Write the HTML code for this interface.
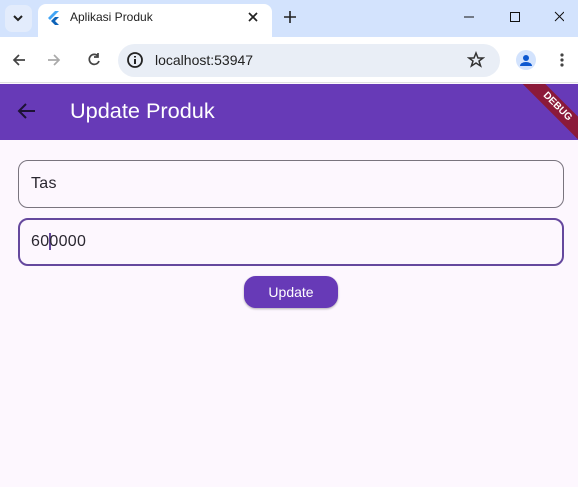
<!DOCTYPE html>
<html><head><style>
*{margin:0;padding:0;box-sizing:border-box}
body{width:578px;height:487px;overflow:hidden;background:#fdf7fe;font-family:"Liberation Sans",sans-serif;position:relative}
.top{position:absolute;left:0;top:0;width:578px;height:37px;background:#d3e3fd}
.tab{position:absolute;left:38px;top:4px;width:234px;height:33px;background:#fff;border-radius:8px 8px 0 0}
.bar{position:absolute;left:0;top:37px;width:578px;height:46px;background:#fff;border-bottom:1px solid #e0e0e0}
.url{position:absolute;left:118px;top:44px;width:382px;height:33px;background:#e9eef6;border-radius:17px}
.app{position:absolute;left:0;top:84px;width:578px;height:56px;background:#673ab7}
.f{position:absolute;left:18px;width:546px;height:48px;border-radius:10px;font-size:16px;color:#2a2730;padding:14px 0 0 12px;letter-spacing:.3px}
</style></head><body>
<div class="top"></div>
<div style="position:absolute;left:5px;top:5px;width:27px;height:27px;background:#e3ecfc;border-radius:7px"></div>
<svg style="position:absolute;left:12px;top:13px" width="12" height="10"><path d="M2 3l4 4 4-4" stroke="#222" stroke-width="2" fill="none"/></svg>
<div class="tab"></div>
<svg style="position:absolute;left:48px;top:11px" width="12" height="14"><path d="M7 0L0 7l2 2 9-9z" fill="#42a5f5"/><path d="M7 6L3 10l4 4h4L7 10l4-4z" fill="#0d63b8"/></svg>
<div style="position:absolute;left:70px;top:10px;font-size:12px;color:#222">Aplikasi Produk</div>
<svg style="position:absolute;left:248px;top:12px" width="10" height="10"><path d="M1 1l8 8M9 1l-8 8" stroke="#222" stroke-width="1.7"/></svg>
<svg style="position:absolute;left:284px;top:11px" width="12" height="12"><path d="M6 0v12M0 6h12" stroke="#222" stroke-width="1.6"/></svg>
<svg style="position:absolute;left:464px;top:10px" width="100" height="14"><path d="M0 7h10" stroke="#111"/><rect x="46.5" y="2.5" width="9" height="9" stroke="#111" fill="none"/><path d="M91 2l9 9M100 2l-9 9" stroke="#111"/></svg>
<div class="bar"></div>
<svg style="position:absolute;left:11px;top:52px;" width="100" height="16"><path d="M14 8H3M8 3L3 8l5 5" stroke="#444" stroke-width="1.7" fill="none"/><path d="M37 8h11M43 3l5 5-5 5" stroke="#aaa" stroke-width="1.7" fill="none"/><path d="M87 4a5 5 0 1 0 1 5M87 1v4h-4" stroke="#444" stroke-width="1.7" fill="none"/></svg>
<div class="url"></div>
<svg style="position:absolute;left:126px;top:51px" width="18" height="18"><circle cx="9" cy="9" r="7" stroke="#222" stroke-width="1.8" fill="none"/><path d="M9 8v5M9 5v1.5" stroke="#222" stroke-width="2"/></svg>
<div style="position:absolute;left:155px;top:52px;font-size:14px;color:#222">localhost:53947</div>
<svg style="position:absolute;left:467px;top:51px" width="18" height="18"><path d="M9 2l2 5h5l-4 3 1.6 5L9 12l-4.6 3L6 10 2 7h5z" stroke="#333" stroke-width="1.5" fill="none"/></svg>
<div style="position:absolute;left:516px;top:50px;width:20px;height:20px;border-radius:50%;background:#d3e3fd"></div>
<svg style="position:absolute;left:516px;top:50px" width="20" height="20"><circle cx="10" cy="8" r="3" fill="#0b57d0"/><path d="M4 16a6 4 0 0 1 12 0z" fill="#0b57d0"/></svg>
<svg style="position:absolute;left:560px;top:52px" width="4" height="16"><circle cx="2" cy="3" r="1.6" fill="#444"/><circle cx="2" cy="8" r="1.6" fill="#444"/><circle cx="2" cy="13" r="1.6" fill="#444"/></svg>
<div class="app"></div>
<svg style="position:absolute;left:16px;top:102px" width="20" height="18"><path d="M19 9H3M10 2L3 9l7 7" stroke="#1d1235" stroke-width="2" fill="none"/></svg>
<div style="position:absolute;left:70px;top:98px;font-size:21.7px;color:#fff">Update Produk</div>
<div style="position:absolute;left:518px;top:84px;width:60px;height:56px;overflow:hidden">
<div style="position:absolute;left:-6px;top:15px;width:90px;height:16px;background:#8b1a3a;transform:rotate(45deg);color:#fff;font-size:10px;font-weight:bold;text-align:center;line-height:16px">DEBUG</div></div>
<div class="f" style="top:160px;border:1px solid #79747e">Tas</div>
<div class="f" style="top:218px;border:2px solid #65489e;padding-left:11px;padding-top:13px">60<span style="border-left:2px solid #65489e;margin-right:-2px"></span>0000</div>
<div style="position:absolute;left:244px;top:276px;width:94px;height:32px;border-radius:12px;background:#673ab7;color:#fff;font-size:14px;text-align:center;line-height:32px;box-shadow:0 1px 2px rgba(0,0,0,.3)">Update</div>
</body></html>
